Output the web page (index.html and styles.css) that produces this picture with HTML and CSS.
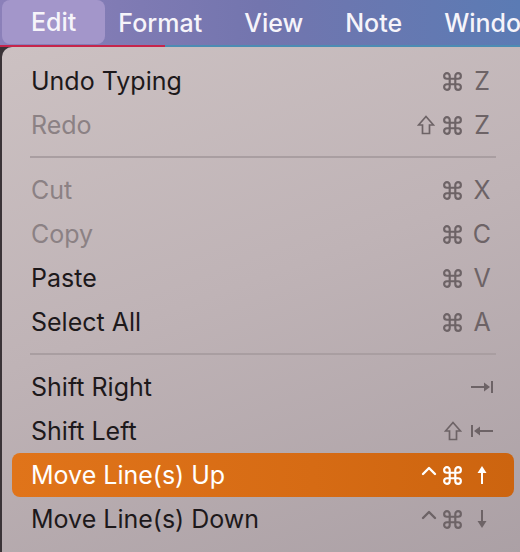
FILE: index.html
```html
<!DOCTYPE html>
<html>
<head>
<meta charset="utf-8">
<link rel="stylesheet" href="styles.css">
</head>
<body>
<svg width="0" height="0" class="defs">
  <defs>
    <symbol id="cmd" viewBox="1.8 1.8 20.4 20.4"><path d="M9 9h6v6H9z M9 9V6a3 3 0 1 0-3 3h3 M15 9V6a3 3 0 1 1 3 3h-3 M9 15v3a3 3 0 1 1-3-3h3 M15 15v3a3 3 0 1 0 3-3h-3" fill="none" stroke="currentColor" stroke-width="2.3" stroke-linejoin="round"/></symbol>
    <symbol id="shift" viewBox="0 0 18 20"><path d="M9 1.5 L16.5 10 H12.5 V18.5 H5.5 V10 H1.5 Z" fill="none" stroke="currentColor" stroke-width="1.7" stroke-linejoin="miter"/></symbol>
    <symbol id="tabr" viewBox="0 0 24 14"><path d="M1 7 H16" stroke="currentColor" stroke-width="2"/><path d="M14 2.5 L20 7 L14 11.5 Z" fill="currentColor"/><path d="M22 1 V13" stroke="currentColor" stroke-width="2"/></symbol>
    <symbol id="tabl" viewBox="0 0 24 14"><path d="M8 7 H23" stroke="currentColor" stroke-width="2"/><path d="M10 2.5 L4 7 L10 11.5 Z" fill="currentColor"/><path d="M2 1 V13" stroke="currentColor" stroke-width="2"/></symbol>
    <symbol id="up" viewBox="0 0 10 20"><path d="M5 6 V19" stroke="currentColor" stroke-width="2"/><path d="M0.5 8 L5 1 L9.5 8 Z" fill="currentColor"/></symbol>
    <symbol id="down" viewBox="0 0 10 20"><path d="M5 1 V14" stroke="currentColor" stroke-width="2"/><path d="M0.5 12 L5 19 L9.5 12 Z" fill="currentColor"/></symbol>
    <symbol id="ctrl" viewBox="0 0 16 20"><path d="M2 9 L8 3 L14 9" fill="none" stroke="currentColor" stroke-width="2.4" stroke-linecap="round" stroke-linejoin="round"/></symbol>
  </defs>
</svg>
<div class="menubar">
  <span class="mb-item active">Edit</span>
  <span class="mb-item">Format</span>
  <span class="mb-item">View</span>
  <span class="mb-item">Note</span>
  <span class="mb-item">Window</span>
</div>
<div class="edge"><div class="edge-red"></div><div class="edge-blue"></div></div>
<div class="stage">
  <div class="menu">
    <div class="row"><span class="label">Undo Typing</span><span class="sc"><span class="mods"><svg class="i-cmd"><use href="#cmd"/></svg></span><span class="key">Z</span></span></div>
    <div class="row disabled"><span class="label">Redo</span><span class="sc"><span class="mods"><svg class="i-shift"><use href="#shift"/></svg><svg class="i-cmd"><use href="#cmd"/></svg></span><span class="key">Z</span></span></div>
    <div class="sep"></div>
    <div class="row disabled"><span class="label">Cut</span><span class="sc"><span class="mods"><svg class="i-cmd"><use href="#cmd"/></svg></span><span class="key">X</span></span></div>
    <div class="row disabled"><span class="label">Copy</span><span class="sc"><span class="mods"><svg class="i-cmd"><use href="#cmd"/></svg></span><span class="key">C</span></span></div>
    <div class="row"><span class="label">Paste</span><span class="sc"><span class="mods"><svg class="i-cmd"><use href="#cmd"/></svg></span><span class="key">V</span></span></div>
    <div class="row"><span class="label">Select All</span><span class="sc"><span class="mods"><svg class="i-cmd"><use href="#cmd"/></svg></span><span class="key">A</span></span></div>
    <div class="sep"></div>
    <div class="row"><span class="label">Shift Right</span><span class="sc"><span class="key"><svg class="i-tab"><use href="#tabr"/></svg></span></span></div>
    <div class="row"><span class="label">Shift Left</span><span class="sc"><span class="mods"><svg class="i-shift"><use href="#shift"/></svg></span><span class="key"><svg class="i-tab"><use href="#tabl"/></svg></span></span></div>
    <div class="row selected"><span class="label">Move Line(s) Up</span><span class="sc"><span class="mods"><svg class="i-ctrl"><use href="#ctrl"/></svg><svg class="i-cmd"><use href="#cmd"/></svg></span><span class="key"><svg class="i-arrow"><use href="#up"/></svg></span></span></div>
    <div class="row"><span class="label">Move Line(s) Down</span><span class="sc"><span class="mods"><svg class="i-ctrl"><use href="#ctrl"/></svg><svg class="i-cmd"><use href="#cmd"/></svg></span><span class="key"><svg class="i-arrow"><use href="#down"/></svg></span></span></div>
  </div>
</div>
</body>
</html>
```
FILE: styles.css
```css
html, body {
  margin: 0;
  padding: 0;
  width: 520px;
  height: 552px;
  overflow: hidden;
  background: #3a3337;
  font-family: Inter, "Noto Sans", sans-serif;
}
.defs { position: absolute; width: 0; height: 0; }
.menubar {
  height: 45px;
  display: flex;
  align-items: stretch;
  padding-left: 2px;
  background: linear-gradient(90deg, #8b80b9 0%, #7375ae 50%, #5b7bb4 100%);
  overflow: hidden;
  white-space: nowrap;
}
.mb-item {
  display: flex;
  align-items: center;
  padding: 0 21px;
  color: #f6f4fa;
  font-size: 25px;
  font-weight: 500;
}
.mb-item.active {
  padding: 0 29px;
  margin-right: -8px;
  background: #a396ca;
  border-radius: 8px;
  margin-bottom: 1px;
}
.edge {
  display: flex;
  height: 2px;
}
.edge-red { width: 165px; background: #c6254c; }
.edge-blue { flex: 1; background: #4c8cb3; }
.stage {
  padding-left: 2px;
}
.menu {
  height: 520px;
  border-top-left-radius: 10px;
  background: linear-gradient(160deg, #ccc1c2 0%, #bfb3b6 45%, #aa9fa4 100%);
  padding: 12px 6px 0 10px;
}
.row {
  height: 44px;
  display: flex;
  align-items: center;
  justify-content: space-between;
  padding: 0 20px 0 19px;
  border-radius: 8px;
  color: #1d191b;
  font-size: 25px;
}
.row.disabled { color: #8b8184; }
.sc {
  display: flex;
  align-items: center;
  gap: 8px;
  color: #6d6366;
}
.mods {
  display: flex;
  align-items: center;
  gap: 8px;
}
.key {
  width: 24px;
  display: flex;
  justify-content: center;
  align-items: center;
  font-size: 25px;
}
.sc svg { display: block; }
.i-cmd { width: 19px; height: 19px; }
.i-shift { width: 18px; height: 20px; }
.i-tab { width: 24px; height: 14px; }
.i-arrow { width: 10px; height: 20px; }
.i-ctrl { width: 16px; height: 20px; margin-right: -2px; }
.row.selected {
  background: linear-gradient(90deg, #e0741a 0%, #d66b14 60%, #cc640f 100%);
  color: #ffffff;
}
.row.selected .sc { color: #ffffff; }
.sep {
  height: 2px;
  margin: 9px 18px 10px 18px;
  background: #a99ea1;
}
```
